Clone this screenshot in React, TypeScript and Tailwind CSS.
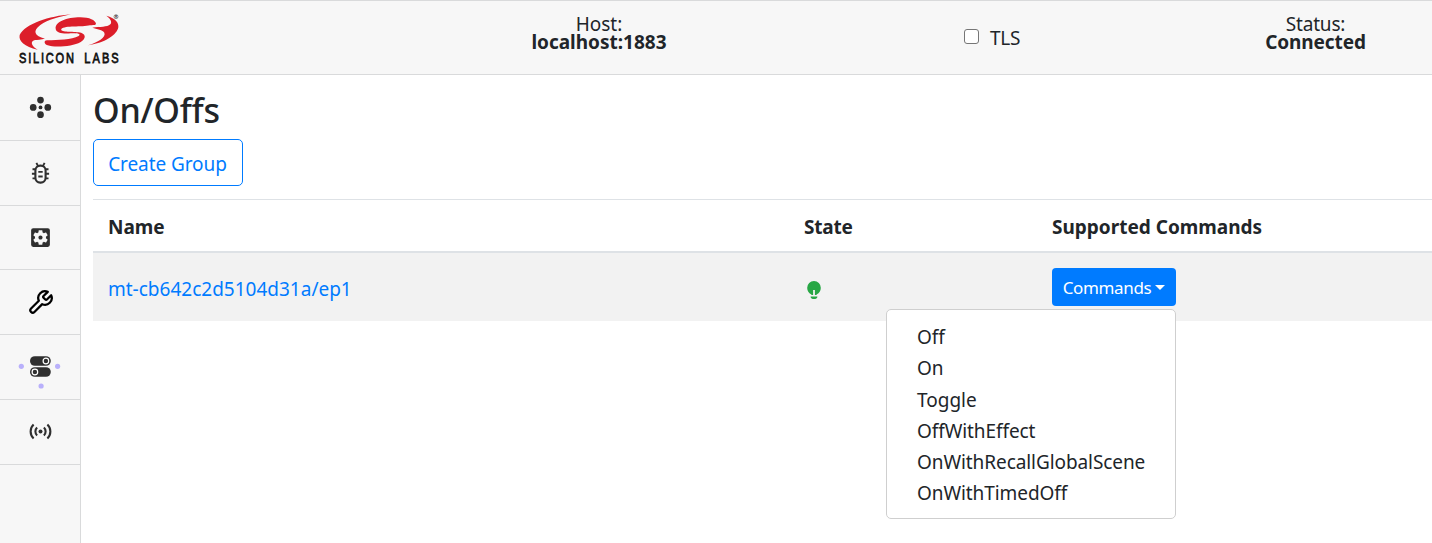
import type { ReactNode } from "react";
import { FiTool } from "react-icons/fi";
import { MdSettingsApplications } from "react-icons/md";

function Logo() {
  return (
    <svg className="overflow-visible" width="108" height="58" viewBox="55 36 324 174" fontFamily="Liberation Sans, sans-serif">
      <g fill="#dc1e2a">
        <path d="M214 43C150 48 76 72 60 105C56 123 74 140 114 149C98 141 88 124 106 120C112 119 125 119 136 116C104 108 98 93 122 75C145 59 180 50 214 43Z" />
        <path d="M168 86C166 66 200 52 242 52C270 52 287 61 289 71C288 77 279 74 271 76C247 82 196 76 185 87C181 97 212 94 237 97C259 100 262 115 242 127C220 140 163 143 144 136C131 132 133 120 143 121C174 120 216 119 237 108C246 101 232 99 213 100C190 102 169 99 168 86Z" />
        <path d="M320 47C347 54 358 68 356 82C352 104 318 129 265 136C294 127 320 112 314 98C310 89 291 88 278 83C302 80 322 82 332 73C339 65 330 54 320 47Z" />
      </g>
      <circle cx="349" cy="50" r="6" fill="none" stroke="#333" strokeWidth="1.5" />
      <text x="346" y="53.5" fontSize="9" fontWeight="700" fill="#222">R</text>
      <g fill="#111" stroke="#111" strokeWidth="2.4" fontSize="46">
        <text transform="translate(58 189) scale(0.72 1)" textLength="229" lengthAdjust="spacing">SILICON</text>
        <text transform="translate(254 189) scale(0.72 1)" textLength="143" lengthAdjust="spacing">LABS</text>
      </g>
    </svg>
  );
}

function DevicesIcon() {
  return (
    <svg width="25" height="25" viewBox="-0.5 -0.5 25 25" fill="#2f2f2f">
      <circle cx="12" cy="4.6" r="3.35" />
      <circle cx="12" cy="19.2" r="3.35" />
      <circle cx="4.7" cy="11.9" r="3.35" />
      <circle cx="19.3" cy="11.9" r="3.35" />
      <circle cx="12" cy="11.9" r="1.9" />
    </svg>
  );
}

function BugIcon() {
  return (
    <svg width="25" height="25" viewBox="-0.5 -0.5 25 25" fill="none" stroke="#2f2f2f" strokeWidth="2.1">
      <rect x="6.9" y="4.1" width="10.2" height="17" rx="4.8" />
      <path d="M9.6 4.6L7.9 1.4M14.4 4.6l1.7-3.2M7 7.8H4M7 12.3H3.4M7 16.9H4M17 7.8h3M17 12.3h3.6M17 16.9h3M9.8 10.4h4.4M9.8 15h4.4" strokeWidth="1.9" />
    </svg>
  );
}

function RadioIcon() {
  return (
    <svg width="25" height="25" viewBox="-0.5 -0.5 25 25" fill="none" stroke="#2f2f2f" strokeWidth="2.1">
      <circle cx="12" cy="12" r="2" fill="#2f2f2f" stroke="none" />
      <path d="M5.1 5.1a9.5 9.5 0 0 0 0 13.8M18.9 5.1a9.5 9.5 0 0 1 0 13.8M8.6 8.1a5.3 5.3 0 0 0 0 7.8M15.4 8.1a5.3 5.3 0 0 1 0 7.8" />
    </svg>
  );
}

function OnOffIcon() {
  return (
    <svg width="45" height="34" viewBox="0 0 45 34">
      <g fill="#b9b0fb">
        <circle cx="3.3" cy="11.3" r="2.6" />
        <circle cx="39.6" cy="11.3" r="2.6" />
        <circle cx="23.1" cy="31" r="2.6" />
      </g>
      <rect x="12" y="1.2" width="20.8" height="9.6" rx="4.8" fill="#2f2f2f" />
      <rect x="12" y="12.2" width="20.8" height="9.6" rx="4.8" fill="#2f2f2f" />
      <g fill="none" stroke="#fff" strokeWidth="1.2">
        <circle cx="27.9" cy="6" r="2.8" />
        <circle cx="16.9" cy="17" r="2.8" />
      </g>
    </svg>
  );
}

function BulbIcon() {
  return (
    <svg width="14" height="19" viewBox="0 0 14 19" fill="#28a745">
      <path d="M7 0a6.8 6.8 0 0 0-6.8 6.9c0 3 1.6 5.1 3.8 6.3.2.5.5.8 1 .8h1.1V9h1.8v5H9c.5 0 .8-.3 1-.8 2.2-1.2 3.8-3.3 3.8-6.3A6.8 6.8 0 0 0 7 0Z" />
      <path d="M3.6 15.6h6.8c0 1.3-.8 2.3-2 2.3H5.6c-1.2 0-2-1-2-2.3Z" />
    </svg>
  );
}

const commands = [
  { name: "Off", cls: "h-[31px]" },
  { name: "On", cls: "h-[32px]" },
  { name: "Toggle", cls: "h-[31px]" },
  { name: "OffWithEffect", cls: "h-[31px] tracking-[-0.08px]" },
  { name: "OnWithRecallGlobalScene", cls: "h-[31px] tracking-[-0.08px]" },
  { name: "OnWithTimedOff", cls: "h-[31px] tracking-[-0.08px]" },
];

function NavItem({ children, cls }: { children: ReactNode; cls: string }) {
  return <a className={`flex items-center justify-center border-b border-[#d9dadb] ${cls}`}>{children}</a>;
}

export default function App() {
  return (
    <div className="flex h-[543px] w-full flex-col overflow-hidden bg-white font-['Noto_Sans','Open_Sans',sans-serif] text-[19px] text-[#212529]">
      <header className="flex h-[75px] shrink-0 border-y border-[#d9dadb] bg-[#f7f7f7]">
        <div className="w-[240px] pl-[18px] pt-[11px]"><Logo /></div>
        <div className="flex w-[718px] flex-col items-center pt-[14px] leading-[18px]">
          <span>Host:</span>
          <span className="font-bold">localhost:1883</span>
        </div>
        <label className="flex w-[241px] items-start gap-3 pl-[6px] pt-[24px]">
          <input type="checkbox" className="mt-[4px] size-[15px] appearance-none rounded-[3px] border border-[#767676] bg-white" />
          <span className="-ml-px leading-[26px] tracking-[-0.2px]">TLS</span>
        </label>
        <div className="flex w-[233px] flex-col items-center pt-[14px] leading-[18px]">
          <span className="tracking-[-0.2px]">Status:</span>
          <span className="font-bold tracking-[-0.1px]">Connected</span>
        </div>
      </header>
      <div className="flex min-h-0 flex-1">
        <nav className="w-[81px] shrink-0 border-r border-[#d9dadb] bg-[#f7f7f7]">
          <NavItem cls="h-[66px]"><DevicesIcon /></NavItem>
          <NavItem cls="h-[65px]"><BugIcon /></NavItem>
          <NavItem cls="h-[64px]"><MdSettingsApplications size={25} color="#2f2f2f" /></NavItem>
          <NavItem cls="h-[65px]"><FiTool size={27} color="#000" /></NavItem>
          <NavItem cls="h-[65px] pt-[9px]"><OnOffIcon /></NavItem>
          <NavItem cls="h-[65px] pb-px"><RadioIcon /></NavItem>
        </nav>
        <main className="min-w-0 flex-1 pl-3">
          <h1 className="h-[64px] pt-[14px] text-[34px] font-medium leading-[42px] tracking-[-0.25px]">On/Offs</h1>
          <button className="flex h-[47px] w-[150px] items-center justify-center rounded-[5px] border border-[#007bff] pr-px pt-[3px] tracking-[-0.08px] text-[#007bff]">
            Create Group
          </button>
          <div className="mt-[13px] grid h-[54px] grid-cols-[696px_248px_1fr] items-center border-b-2 border-t border-[#dee2e6] pl-[15px] pt-[3px] font-bold">
            <span>Name</span>
            <span className="tracking-[-0.2px]">State</span>
            <span>Supported Commands</span>
          </div>
          <div className="grid h-[68px] grid-cols-[696px_248px_1fr] items-center bg-[#f2f2f2] pl-[15px]">
            <a className="pt-[4px] text-[#007bff]">mt-cb642c2d5104d31a/ep1</a>
            <span className="pl-[3px] pt-[6px]"><BulbIcon /></span>
            <div className="relative w-[124px]">
              <button className="flex h-[38px] w-[124px] items-center justify-center gap-1 rounded-[4px] bg-[#007bff] pt-px text-[17px] tracking-[-0.35px] text-white">
                Commands
                <span className="border-x-[5px] border-t-[5px] border-x-transparent border-t-white" />
              </button>
              <ul className="absolute right-0 top-[41px] z-10 h-[210px] w-[290px] rounded-[5px] border border-[#cfcfcf] bg-white pl-[30px] pt-[12px] leading-[31px]">
                {commands.map((c) => (
                  <li key={c.name} className={c.cls}>{c.name}</li>
                ))}
              </ul>
            </div>
          </div>
        </main>
      </div>
    </div>
  );
}
